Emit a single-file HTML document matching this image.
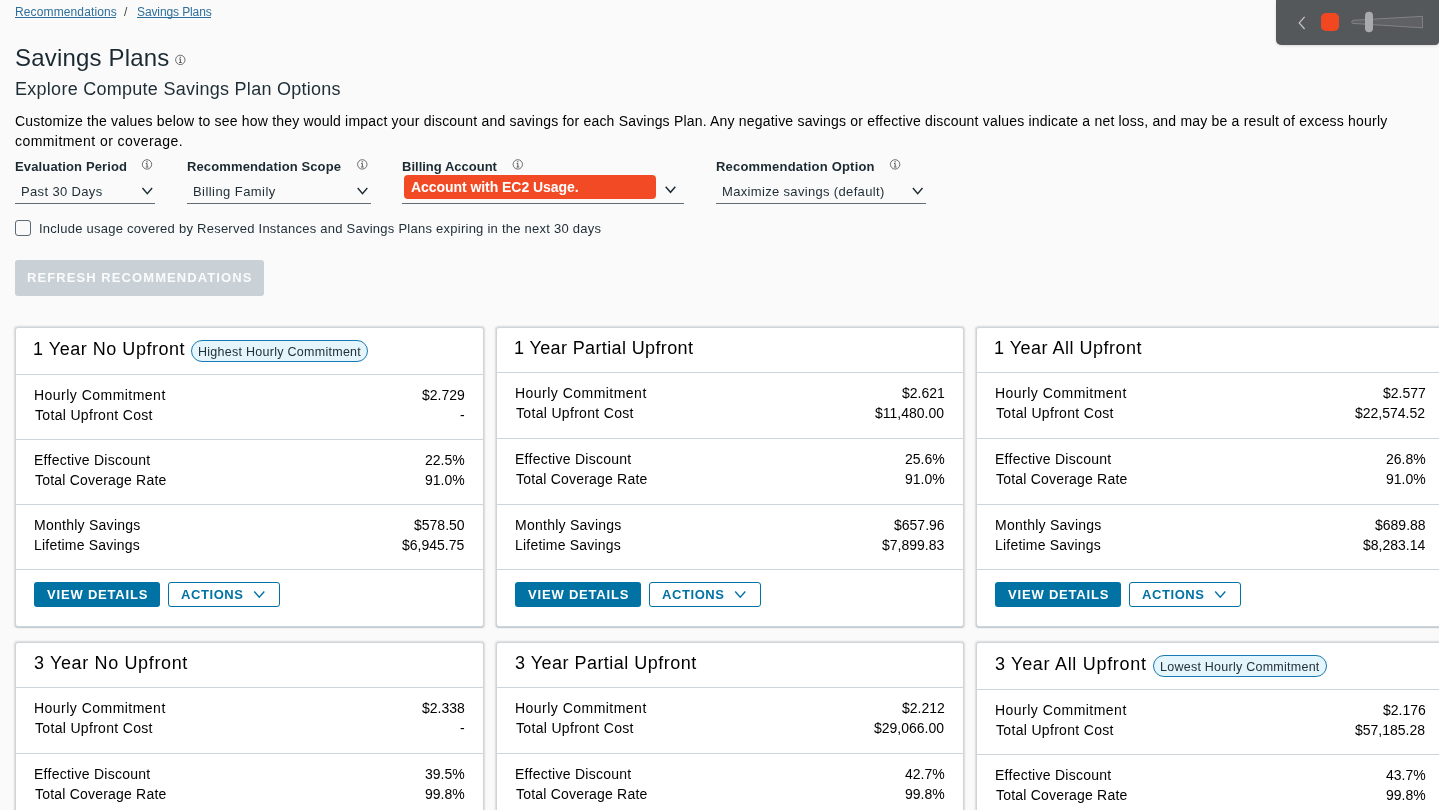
<!DOCTYPE html><html><head><meta charset="utf-8"><style>
html,body{margin:0;padding:0;width:1439px;height:810px;overflow:hidden;background:#fafafa;font-family:"Liberation Sans", sans-serif;}
.t{position:absolute;white-space:nowrap;will-change:transform;}
.a{position:absolute;display:block;}
.box{position:absolute;box-sizing:border-box;}
</style></head><body>
<div class="t" style="left:15.40px;top:4.34px;font-size:12px;line-height:16px;color:#2d6f9b;font-weight:400;letter-spacing:0.124px;">Recommendations</div>
<div class="box" style="left:15px;top:17px;width:101px;height:1px;background:#2d6f9b"></div>
<div class="t" style="left:124.00px;top:4.34px;font-size:12px;line-height:16px;color:#444;font-weight:400;">/</div>
<div class="t" style="left:136.52px;top:4.34px;font-size:12px;line-height:16px;color:#2d6f9b;font-weight:400;letter-spacing:-0.111px;">Savings Plans</div>
<div class="box" style="left:137px;top:17px;width:74px;height:1px;background:#2d6f9b"></div>
<div class="t" style="left:15.45px;top:42.68px;font-size:24px;line-height:30px;color:#1b2a32;font-weight:400;letter-spacing:0.184px;">Savings Plans</div>
<svg class="a" style="left:174px;top:54px" width="12" height="12" viewBox="0 0 12 12"><g transform="translate(0.80 0.40)"><circle cx="5.5" cy="5.5" r="4.7" fill="none" stroke="#555" stroke-width="0.85"/><rect x="4.95" y="2.3" width="1.15" height="1.15" fill="#555"/><path d="M4.4 4.55H5.55V7.9M4.3 8.1H6.9" fill="none" stroke="#555" stroke-width="1.0"/></g></svg>
<div class="t" style="left:15.31px;top:76.76px;font-size:18px;line-height:24px;color:#1e2d36;font-weight:400;letter-spacing:0.270px;">Explore Compute Savings Plan Options</div>
<div class="t" style="left:14.84px;top:111.15px;font-size:14px;line-height:20px;color:#000;font-weight:400;letter-spacing:0.194px;">Customize the values below to see how they would impact your discount and savings for each Savings Plan. Any negative savings or effective discount values indicate a net loss, and may be a result of excess hourly</div>
<div class="t" style="left:14.94px;top:131.15px;font-size:14px;line-height:20px;color:#000;font-weight:400;letter-spacing:0.436px;">commitment or coverage.</div>
<div class="t" style="left:15.13px;top:158.50px;font-size:13px;line-height:16px;color:#1b2a32;font-weight:700;letter-spacing:0.140px;">Evaluation Period</div>
<svg class="a" style="left:141px;top:158px" width="12" height="12" viewBox="0 0 12 12"><g transform="translate(0.50 0.90)"><circle cx="5.5" cy="5.5" r="4.7" fill="none" stroke="#555" stroke-width="0.85"/><rect x="4.95" y="2.3" width="1.15" height="1.15" fill="#555"/><path d="M4.4 4.55H5.55V7.9M4.3 8.1H6.9" fill="none" stroke="#555" stroke-width="1.0"/></g></svg>
<div class="t" style="left:187.13px;top:158.50px;font-size:13px;line-height:16px;color:#1b2a32;font-weight:700;letter-spacing:0.120px;">Recommendation Scope</div>
<svg class="a" style="left:356px;top:158px" width="12" height="12" viewBox="0 0 12 12"><g transform="translate(0.80 0.90)"><circle cx="5.5" cy="5.5" r="4.7" fill="none" stroke="#555" stroke-width="0.85"/><rect x="4.95" y="2.3" width="1.15" height="1.15" fill="#555"/><path d="M4.4 4.55H5.55V7.9M4.3 8.1H6.9" fill="none" stroke="#555" stroke-width="1.0"/></g></svg>
<div class="t" style="left:401.93px;top:158.50px;font-size:13px;line-height:16px;color:#1b2a32;font-weight:700;letter-spacing:0.005px;">Billing Account</div>
<svg class="a" style="left:512px;top:158px" width="12" height="12" viewBox="0 0 12 12"><g transform="translate(0.30 0.90)"><circle cx="5.5" cy="5.5" r="4.7" fill="none" stroke="#555" stroke-width="0.85"/><rect x="4.95" y="2.3" width="1.15" height="1.15" fill="#555"/><path d="M4.4 4.55H5.55V7.9M4.3 8.1H6.9" fill="none" stroke="#555" stroke-width="1.0"/></g></svg>
<div class="t" style="left:716.33px;top:158.50px;font-size:13px;line-height:16px;color:#1b2a32;font-weight:700;letter-spacing:0.198px;">Recommendation Option</div>
<svg class="a" style="left:889px;top:158px" width="12" height="12" viewBox="0 0 12 12"><g transform="translate(0.60 0.90)"><circle cx="5.5" cy="5.5" r="4.7" fill="none" stroke="#555" stroke-width="0.85"/><rect x="4.95" y="2.3" width="1.15" height="1.15" fill="#555"/><path d="M4.4 4.55H5.55V7.9M4.3 8.1H6.9" fill="none" stroke="#555" stroke-width="1.0"/></g></svg>
<div class="t" style="left:20.92px;top:183.50px;font-size:13px;line-height:16px;color:#1e2d36;font-weight:400;letter-spacing:0.356px;">Past 30 Days</div>
<svg class="a" style="left:141px;top:187px" width="13" height="9" viewBox="0 0 13 9"><path d="M1.50 1.00L6.30 6.60L11.10 1.00" fill="none" stroke="#1b2a32" stroke-width="1.4"/></svg>
<div class="box" style="left:15px;top:203px;width:140px;height:1px;background:#5f6d77"></div>
<div class="t" style="left:193.32px;top:183.50px;font-size:13px;line-height:16px;color:#1e2d36;font-weight:400;letter-spacing:0.434px;">Billing Family</div>
<svg class="a" style="left:357px;top:187px" width="13" height="9" viewBox="0 0 13 9"><path d="M0.70 1.00L5.50 6.60L10.30 1.00" fill="none" stroke="#1b2a32" stroke-width="1.4"/></svg>
<div class="box" style="left:187px;top:203px;width:183.5px;height:1px;background:#5f6d77"></div>
<div class="t" style="left:721.52px;top:183.50px;font-size:13px;line-height:16px;color:#1e2d36;font-weight:400;letter-spacing:0.333px;">Maximize savings (default)</div>
<svg class="a" style="left:912px;top:187px" width="13" height="9" viewBox="0 0 13 9"><path d="M0.90 1.00L5.70 6.60L10.50 1.00" fill="none" stroke="#1b2a32" stroke-width="1.4"/></svg>
<div class="box" style="left:716px;top:203px;width:209.79999999999995px;height:1px;background:#5f6d77"></div>
<div class="box" style="left:404px;top:175px;width:252px;height:24px;background:#f24a24;border-radius:4px"></div>
<div class="t" style="left:410.54px;top:178.15px;font-size:14px;line-height:18px;color:#fff;font-weight:700;letter-spacing:-0.056px;">Account with EC2 Usage.</div>
<svg class="a" style="left:665px;top:186px" width="13" height="9" viewBox="0 0 13 9"><path d="M0.70 0.70L5.50 6.30L10.30 0.70" fill="none" stroke="#1b2a32" stroke-width="1.4"/></svg>
<div class="box" style="left:402px;top:203px;width:282px;height:1px;background:#5f6d77"></div>
<div class="box" style="left:15px;top:220px;width:16px;height:16px;border:1px solid #5b6a74;border-radius:3px;background:transparent"></div>
<div class="t" style="left:39.37px;top:220.50px;font-size:13px;line-height:16px;color:#1e2d36;font-weight:400;letter-spacing:0.250px;">Include usage covered by Reserved Instances and Savings Plans expiring in the next 30 days</div>
<div class="box" style="left:15px;top:260px;width:249px;height:36px;background:#c9d0d6;border-radius:3px"></div>
<div class="t" style="left:27.18px;top:270.00px;font-size:13px;line-height:16px;color:#fafbfc;font-weight:700;letter-spacing:1.080px;">REFRESH RECOMMENDATIONS</div>
<div class="box" style="left:1276px;top:0;width:163px;height:45px;background:#55585b;border-radius:0 0 4px 5px;box-shadow:0 1px 3px rgba(0,0,0,0.12)"></div>
<svg class="a" style="left:1297px;top:15px" width="10" height="16" viewBox="0 0 10 16"><path d="M7.6 1.8L2.2 7.9L7.6 14" fill="none" stroke="#c8c8c8" stroke-width="1.2"/></svg>
<div class="box" style="left:1321px;top:13px;width:18px;height:18px;background:#f24822;border-radius:5px"></div>
<svg class="a" style="left:1350px;top:10px" width="76" height="24" viewBox="0 0 76 24"><path d="M2.5 10.4L72.5 6.3V17.8L2.5 13.4Q0.8 11.9 2.5 10.4Z" fill="#5f6164" stroke="#8a8c8e" stroke-width="0.8"/><rect x="15" y="1.7" width="8" height="20.5" rx="4" fill="#a9aaac"/></svg>

<div class="box" style="left:15px;top:327px;width:469px;height:300px;background:#fff;border:1px solid #cdd5da;border-radius:3px;box-shadow:0 1px 0 0 #c4cdd3, 0 0 2px 0.5px rgba(0,0,0,0.13)"></div>
<div class="box" style="left:16px;top:374px;width:467px;height:1px;background:#cdd5da"></div>
<div class="box" style="left:16px;top:439px;width:467px;height:1px;background:#cdd5da"></div>
<div class="box" style="left:16px;top:504px;width:467px;height:1px;background:#cdd5da"></div>
<div class="box" style="left:16px;top:569px;width:467px;height:1px;background:#cdd5da"></div>
<div class="t" style="left:33.06px;top:336.76px;font-size:18px;line-height:24px;color:#000;font-weight:400;letter-spacing:0.530px;">1 Year No Upfront</div>
<div class="box" style="left:191px;top:340px;width:177px;height:22px;background:#e5f5fc;border:1px solid #1a7ab4;border-radius:11px"></div>
<div class="t" style="left:198.17px;top:343.67px;font-size:12.5px;line-height:16px;color:#22313a;font-weight:400;letter-spacing:0.272px;">Highest Hourly Commitment</div>
<div class="t" style="left:34.02px;top:385.15px;font-size:14px;line-height:20px;color:#000;font-weight:400;letter-spacing:0.474px;">Hourly Commitment</div>
<div class="t" style="left:421.60px;top:385.15px;font-size:14px;line-height:20px;color:#000;font-weight:400;">$2.729</div>
<div class="t" style="left:34.87px;top:405.15px;font-size:14px;line-height:20px;color:#000;font-weight:400;letter-spacing:0.321px;">Total Upfront Cost</div>
<div class="t" style="left:459.70px;top:405.15px;font-size:14px;line-height:20px;color:#000;font-weight:400;">-</div>
<div class="t" style="left:34.02px;top:450.15px;font-size:14px;line-height:20px;color:#000;font-weight:400;letter-spacing:0.260px;">Effective Discount</div>
<div class="t" style="left:424.70px;top:450.15px;font-size:14px;line-height:20px;color:#000;font-weight:400;">22.5%</div>
<div class="t" style="left:34.87px;top:470.15px;font-size:14px;line-height:20px;color:#000;font-weight:400;letter-spacing:0.202px;">Total Coverage Rate</div>
<div class="t" style="left:424.70px;top:470.15px;font-size:14px;line-height:20px;color:#000;font-weight:400;">91.0%</div>
<div class="t" style="left:34.02px;top:515.15px;font-size:14px;line-height:20px;color:#000;font-weight:400;letter-spacing:0.259px;">Monthly Savings</div>
<div class="t" style="left:413.80px;top:515.15px;font-size:14px;line-height:20px;color:#000;font-weight:400;">$578.50</div>
<div class="t" style="left:34.02px;top:535.15px;font-size:14px;line-height:20px;color:#000;font-weight:400;letter-spacing:0.206px;">Lifetime Savings</div>
<div class="t" style="left:402.10px;top:535.15px;font-size:14px;line-height:20px;color:#000;font-weight:400;">$6,945.75</div>
<div class="box" style="left:34px;top:582px;width:126px;height:25px;background:#0072a3;border-radius:3px"></div>
<div class="t" style="left:46.76px;top:587.00px;font-size:13px;line-height:16px;color:#fff;font-weight:700;letter-spacing:0.813px;">VIEW DETAILS</div>
<div class="box" style="left:168px;top:582px;width:112px;height:25px;background:#fff;border:1px solid #0072a3;border-radius:3px"></div>
<div class="t" style="left:180.70px;top:587.00px;font-size:13px;line-height:16px;color:#0072a3;font-weight:700;letter-spacing:0.583px;">ACTIONS</div>
<svg class="a" style="left:253px;top:590px" width="14" height="9" viewBox="0 0 14 9"><path d="M1.20 1.50L6.25 7.10L11.30 1.50" fill="none" stroke="#0072a3" stroke-width="1.4"/></svg>
<div class="box" style="left:496px;top:327px;width:468px;height:300px;background:#fff;border:1px solid #cdd5da;border-radius:3px;box-shadow:0 1px 0 0 #c4cdd3, 0 0 2px 0.5px rgba(0,0,0,0.13)"></div>
<div class="box" style="left:497px;top:372px;width:466px;height:1px;background:#cdd5da"></div>
<div class="box" style="left:497px;top:438px;width:466px;height:1px;background:#cdd5da"></div>
<div class="box" style="left:497px;top:504px;width:466px;height:1px;background:#cdd5da"></div>
<div class="box" style="left:497px;top:569px;width:466px;height:1px;background:#cdd5da"></div>
<div class="t" style="left:514.06px;top:335.76px;font-size:18px;line-height:24px;color:#000;font-weight:400;letter-spacing:0.371px;">1 Year Partial Upfront</div>
<div class="t" style="left:515.02px;top:383.15px;font-size:14px;line-height:20px;color:#000;font-weight:400;letter-spacing:0.474px;">Hourly Commitment</div>
<div class="t" style="left:901.60px;top:383.15px;font-size:14px;line-height:20px;color:#000;font-weight:400;">$2.621</div>
<div class="t" style="left:515.87px;top:403.15px;font-size:14px;line-height:20px;color:#000;font-weight:400;letter-spacing:0.321px;">Total Upfront Cost</div>
<div class="t" style="left:875.40px;top:403.15px;font-size:14px;line-height:20px;color:#000;font-weight:400;">$11,480.00</div>
<div class="t" style="left:515.02px;top:449.15px;font-size:14px;line-height:20px;color:#000;font-weight:400;letter-spacing:0.260px;">Effective Discount</div>
<div class="t" style="left:904.70px;top:449.15px;font-size:14px;line-height:20px;color:#000;font-weight:400;">25.6%</div>
<div class="t" style="left:515.87px;top:469.15px;font-size:14px;line-height:20px;color:#000;font-weight:400;letter-spacing:0.202px;">Total Coverage Rate</div>
<div class="t" style="left:904.70px;top:469.15px;font-size:14px;line-height:20px;color:#000;font-weight:400;">91.0%</div>
<div class="t" style="left:515.02px;top:515.15px;font-size:14px;line-height:20px;color:#000;font-weight:400;letter-spacing:0.259px;">Monthly Savings</div>
<div class="t" style="left:893.80px;top:515.15px;font-size:14px;line-height:20px;color:#000;font-weight:400;">$657.96</div>
<div class="t" style="left:515.02px;top:535.15px;font-size:14px;line-height:20px;color:#000;font-weight:400;letter-spacing:0.206px;">Lifetime Savings</div>
<div class="t" style="left:882.10px;top:535.15px;font-size:14px;line-height:20px;color:#000;font-weight:400;">$7,899.83</div>
<div class="box" style="left:515px;top:582px;width:126px;height:25px;background:#0072a3;border-radius:3px"></div>
<div class="t" style="left:527.76px;top:587.00px;font-size:13px;line-height:16px;color:#fff;font-weight:700;letter-spacing:0.813px;">VIEW DETAILS</div>
<div class="box" style="left:649px;top:582px;width:112px;height:25px;background:#fff;border:1px solid #0072a3;border-radius:3px"></div>
<div class="t" style="left:661.70px;top:587.00px;font-size:13px;line-height:16px;color:#0072a3;font-weight:700;letter-spacing:0.583px;">ACTIONS</div>
<svg class="a" style="left:734px;top:590px" width="14" height="9" viewBox="0 0 14 9"><path d="M1.20 1.50L6.25 7.10L11.30 1.50" fill="none" stroke="#0072a3" stroke-width="1.4"/></svg>
<div class="box" style="left:976px;top:327px;width:469px;height:300px;background:#fff;border:1px solid #cdd5da;border-radius:3px;box-shadow:0 1px 0 0 #c4cdd3, 0 0 2px 0.5px rgba(0,0,0,0.13)"></div>
<div class="box" style="left:977px;top:372px;width:467px;height:1px;background:#cdd5da"></div>
<div class="box" style="left:977px;top:438px;width:467px;height:1px;background:#cdd5da"></div>
<div class="box" style="left:977px;top:504px;width:467px;height:1px;background:#cdd5da"></div>
<div class="box" style="left:977px;top:569px;width:467px;height:1px;background:#cdd5da"></div>
<div class="t" style="left:994.06px;top:335.76px;font-size:18px;line-height:24px;color:#000;font-weight:400;letter-spacing:0.489px;">1 Year All Upfront</div>
<div class="t" style="left:995.02px;top:383.15px;font-size:14px;line-height:20px;color:#000;font-weight:400;letter-spacing:0.474px;">Hourly Commitment</div>
<div class="t" style="left:1382.60px;top:383.15px;font-size:14px;line-height:20px;color:#000;font-weight:400;">$2.577</div>
<div class="t" style="left:995.87px;top:403.15px;font-size:14px;line-height:20px;color:#000;font-weight:400;letter-spacing:0.321px;">Total Upfront Cost</div>
<div class="t" style="left:1355.30px;top:403.15px;font-size:14px;line-height:20px;color:#000;font-weight:400;">$22,574.52</div>
<div class="t" style="left:995.02px;top:449.15px;font-size:14px;line-height:20px;color:#000;font-weight:400;letter-spacing:0.260px;">Effective Discount</div>
<div class="t" style="left:1385.70px;top:449.15px;font-size:14px;line-height:20px;color:#000;font-weight:400;">26.8%</div>
<div class="t" style="left:995.87px;top:469.15px;font-size:14px;line-height:20px;color:#000;font-weight:400;letter-spacing:0.202px;">Total Coverage Rate</div>
<div class="t" style="left:1385.70px;top:469.15px;font-size:14px;line-height:20px;color:#000;font-weight:400;">91.0%</div>
<div class="t" style="left:995.02px;top:515.15px;font-size:14px;line-height:20px;color:#000;font-weight:400;letter-spacing:0.259px;">Monthly Savings</div>
<div class="t" style="left:1374.80px;top:515.15px;font-size:14px;line-height:20px;color:#000;font-weight:400;">$689.88</div>
<div class="t" style="left:995.02px;top:535.15px;font-size:14px;line-height:20px;color:#000;font-weight:400;letter-spacing:0.206px;">Lifetime Savings</div>
<div class="t" style="left:1363.10px;top:535.15px;font-size:14px;line-height:20px;color:#000;font-weight:400;">$8,283.14</div>
<div class="box" style="left:995px;top:582px;width:126px;height:25px;background:#0072a3;border-radius:3px"></div>
<div class="t" style="left:1007.76px;top:587.00px;font-size:13px;line-height:16px;color:#fff;font-weight:700;letter-spacing:0.813px;">VIEW DETAILS</div>
<div class="box" style="left:1129px;top:582px;width:112px;height:25px;background:#fff;border:1px solid #0072a3;border-radius:3px"></div>
<div class="t" style="left:1141.70px;top:587.00px;font-size:13px;line-height:16px;color:#0072a3;font-weight:700;letter-spacing:0.583px;">ACTIONS</div>
<svg class="a" style="left:1214px;top:590px" width="14" height="9" viewBox="0 0 14 9"><path d="M1.20 1.50L6.25 7.10L11.30 1.50" fill="none" stroke="#0072a3" stroke-width="1.4"/></svg>
<div class="box" style="left:15px;top:642px;width:469px;height:300px;background:#fff;border:1px solid #cdd5da;border-radius:3px;box-shadow:0 1px 0 0 #c4cdd3, 0 0 2px 0.5px rgba(0,0,0,0.13)"></div>
<div class="box" style="left:16px;top:687px;width:467px;height:1px;background:#cdd5da"></div>
<div class="box" style="left:16px;top:753px;width:467px;height:1px;background:#cdd5da"></div>
<div class="box" style="left:16px;top:819px;width:467px;height:1px;background:#cdd5da"></div>
<div class="box" style="left:16px;top:884px;width:467px;height:1px;background:#cdd5da"></div>
<div class="t" style="left:33.90px;top:650.76px;font-size:18px;line-height:24px;color:#000;font-weight:400;letter-spacing:0.640px;">3 Year No Upfront</div>
<div class="t" style="left:34.02px;top:698.15px;font-size:14px;line-height:20px;color:#000;font-weight:400;letter-spacing:0.474px;">Hourly Commitment</div>
<div class="t" style="left:421.60px;top:698.15px;font-size:14px;line-height:20px;color:#000;font-weight:400;">$2.338</div>
<div class="t" style="left:34.87px;top:718.15px;font-size:14px;line-height:20px;color:#000;font-weight:400;letter-spacing:0.321px;">Total Upfront Cost</div>
<div class="t" style="left:459.70px;top:718.15px;font-size:14px;line-height:20px;color:#000;font-weight:400;">-</div>
<div class="t" style="left:34.02px;top:764.15px;font-size:14px;line-height:20px;color:#000;font-weight:400;letter-spacing:0.260px;">Effective Discount</div>
<div class="t" style="left:424.70px;top:764.15px;font-size:14px;line-height:20px;color:#000;font-weight:400;">39.5%</div>
<div class="t" style="left:34.87px;top:784.15px;font-size:14px;line-height:20px;color:#000;font-weight:400;letter-spacing:0.202px;">Total Coverage Rate</div>
<div class="t" style="left:424.70px;top:784.15px;font-size:14px;line-height:20px;color:#000;font-weight:400;">99.8%</div>
<div class="t" style="left:35.60px;top:830.15px;font-size:14px;line-height:20px;color:#000;font-weight:400;letter-spacing:0.136px;">Monthly Savings</div>
<div class="t" style="left:35.60px;top:850.15px;font-size:14px;line-height:20px;color:#000;font-weight:400;letter-spacing:0.093px;">Lifetime Savings</div>
<div class="box" style="left:34px;top:897px;width:126px;height:25px;background:#0072a3;border-radius:3px"></div>
<div class="t" style="left:47.00px;top:902.00px;font-size:13px;line-height:16px;color:#fff;font-weight:700;letter-spacing:0.736px;">VIEW DETAILS</div>
<div class="box" style="left:168px;top:897px;width:112px;height:25px;background:#fff;border:1px solid #0072a3;border-radius:3px"></div>
<div class="t" style="left:181.60px;top:902.00px;font-size:13px;line-height:16px;color:#0072a3;font-weight:700;letter-spacing:0.417px;">ACTIONS</div>
<svg class="a" style="left:253px;top:905px" width="14" height="9" viewBox="0 0 14 9"><path d="M1.20 1.50L6.25 7.10L11.30 1.50" fill="none" stroke="#0072a3" stroke-width="1.4"/></svg>
<div class="box" style="left:496px;top:642px;width:468px;height:300px;background:#fff;border:1px solid #cdd5da;border-radius:3px;box-shadow:0 1px 0 0 #c4cdd3, 0 0 2px 0.5px rgba(0,0,0,0.13)"></div>
<div class="box" style="left:497px;top:687px;width:466px;height:1px;background:#cdd5da"></div>
<div class="box" style="left:497px;top:753px;width:466px;height:1px;background:#cdd5da"></div>
<div class="box" style="left:497px;top:819px;width:466px;height:1px;background:#cdd5da"></div>
<div class="box" style="left:497px;top:884px;width:466px;height:1px;background:#cdd5da"></div>
<div class="t" style="left:514.90px;top:650.76px;font-size:18px;line-height:24px;color:#000;font-weight:400;letter-spacing:0.480px;">3 Year Partial Upfront</div>
<div class="t" style="left:515.02px;top:698.15px;font-size:14px;line-height:20px;color:#000;font-weight:400;letter-spacing:0.474px;">Hourly Commitment</div>
<div class="t" style="left:901.60px;top:698.15px;font-size:14px;line-height:20px;color:#000;font-weight:400;">$2.212</div>
<div class="t" style="left:515.87px;top:718.15px;font-size:14px;line-height:20px;color:#000;font-weight:400;letter-spacing:0.321px;">Total Upfront Cost</div>
<div class="t" style="left:874.30px;top:718.15px;font-size:14px;line-height:20px;color:#000;font-weight:400;">$29,066.00</div>
<div class="t" style="left:515.02px;top:764.15px;font-size:14px;line-height:20px;color:#000;font-weight:400;letter-spacing:0.260px;">Effective Discount</div>
<div class="t" style="left:904.70px;top:764.15px;font-size:14px;line-height:20px;color:#000;font-weight:400;">42.7%</div>
<div class="t" style="left:515.87px;top:784.15px;font-size:14px;line-height:20px;color:#000;font-weight:400;letter-spacing:0.202px;">Total Coverage Rate</div>
<div class="t" style="left:904.70px;top:784.15px;font-size:14px;line-height:20px;color:#000;font-weight:400;">99.8%</div>
<div class="t" style="left:516.60px;top:830.15px;font-size:14px;line-height:20px;color:#000;font-weight:400;letter-spacing:0.136px;">Monthly Savings</div>
<div class="t" style="left:516.60px;top:850.15px;font-size:14px;line-height:20px;color:#000;font-weight:400;letter-spacing:0.093px;">Lifetime Savings</div>
<div class="box" style="left:515px;top:897px;width:126px;height:25px;background:#0072a3;border-radius:3px"></div>
<div class="t" style="left:528.00px;top:902.00px;font-size:13px;line-height:16px;color:#fff;font-weight:700;letter-spacing:0.736px;">VIEW DETAILS</div>
<div class="box" style="left:649px;top:897px;width:112px;height:25px;background:#fff;border:1px solid #0072a3;border-radius:3px"></div>
<div class="t" style="left:662.60px;top:902.00px;font-size:13px;line-height:16px;color:#0072a3;font-weight:700;letter-spacing:0.417px;">ACTIONS</div>
<svg class="a" style="left:734px;top:905px" width="14" height="9" viewBox="0 0 14 9"><path d="M1.20 1.50L6.25 7.10L11.30 1.50" fill="none" stroke="#0072a3" stroke-width="1.4"/></svg>
<div class="box" style="left:976px;top:642px;width:469px;height:300px;background:#fff;border:1px solid #cdd5da;border-radius:3px;box-shadow:0 1px 0 0 #c4cdd3, 0 0 2px 0.5px rgba(0,0,0,0.13)"></div>
<div class="box" style="left:977px;top:689px;width:467px;height:1px;background:#cdd5da"></div>
<div class="box" style="left:977px;top:754px;width:467px;height:1px;background:#cdd5da"></div>
<div class="box" style="left:977px;top:819px;width:467px;height:1px;background:#cdd5da"></div>
<div class="box" style="left:977px;top:884px;width:467px;height:1px;background:#cdd5da"></div>
<div class="t" style="left:994.90px;top:651.76px;font-size:18px;line-height:24px;color:#000;font-weight:400;letter-spacing:0.698px;">3 Year All Upfront</div>
<div class="box" style="left:1153px;top:655px;width:174px;height:22px;background:#e5f5fc;border:1px solid #1a7ab4;border-radius:11px"></div>
<div class="t" style="left:1159.77px;top:658.67px;font-size:12.5px;line-height:16px;color:#22313a;font-weight:400;letter-spacing:0.252px;">Lowest Hourly Commitment</div>
<div class="t" style="left:995.02px;top:700.15px;font-size:14px;line-height:20px;color:#000;font-weight:400;letter-spacing:0.474px;">Hourly Commitment</div>
<div class="t" style="left:1382.60px;top:700.15px;font-size:14px;line-height:20px;color:#000;font-weight:400;">$2.176</div>
<div class="t" style="left:995.87px;top:720.15px;font-size:14px;line-height:20px;color:#000;font-weight:400;letter-spacing:0.321px;">Total Upfront Cost</div>
<div class="t" style="left:1355.30px;top:720.15px;font-size:14px;line-height:20px;color:#000;font-weight:400;">$57,185.28</div>
<div class="t" style="left:995.02px;top:765.15px;font-size:14px;line-height:20px;color:#000;font-weight:400;letter-spacing:0.260px;">Effective Discount</div>
<div class="t" style="left:1385.70px;top:765.15px;font-size:14px;line-height:20px;color:#000;font-weight:400;">43.7%</div>
<div class="t" style="left:995.87px;top:785.15px;font-size:14px;line-height:20px;color:#000;font-weight:400;letter-spacing:0.202px;">Total Coverage Rate</div>
<div class="t" style="left:1385.70px;top:785.15px;font-size:14px;line-height:20px;color:#000;font-weight:400;">99.8%</div>
<div class="t" style="left:996.60px;top:830.15px;font-size:14px;line-height:20px;color:#000;font-weight:400;letter-spacing:0.136px;">Monthly Savings</div>
<div class="t" style="left:996.60px;top:850.15px;font-size:14px;line-height:20px;color:#000;font-weight:400;letter-spacing:0.093px;">Lifetime Savings</div>
<div class="box" style="left:995px;top:897px;width:126px;height:25px;background:#0072a3;border-radius:3px"></div>
<div class="t" style="left:1008.00px;top:902.00px;font-size:13px;line-height:16px;color:#fff;font-weight:700;letter-spacing:0.736px;">VIEW DETAILS</div>
<div class="box" style="left:1129px;top:897px;width:112px;height:25px;background:#fff;border:1px solid #0072a3;border-radius:3px"></div>
<div class="t" style="left:1142.60px;top:902.00px;font-size:13px;line-height:16px;color:#0072a3;font-weight:700;letter-spacing:0.417px;">ACTIONS</div>
<svg class="a" style="left:1214px;top:905px" width="14" height="9" viewBox="0 0 14 9"><path d="M1.20 1.50L6.25 7.10L11.30 1.50" fill="none" stroke="#0072a3" stroke-width="1.4"/></svg>
</body></html>
